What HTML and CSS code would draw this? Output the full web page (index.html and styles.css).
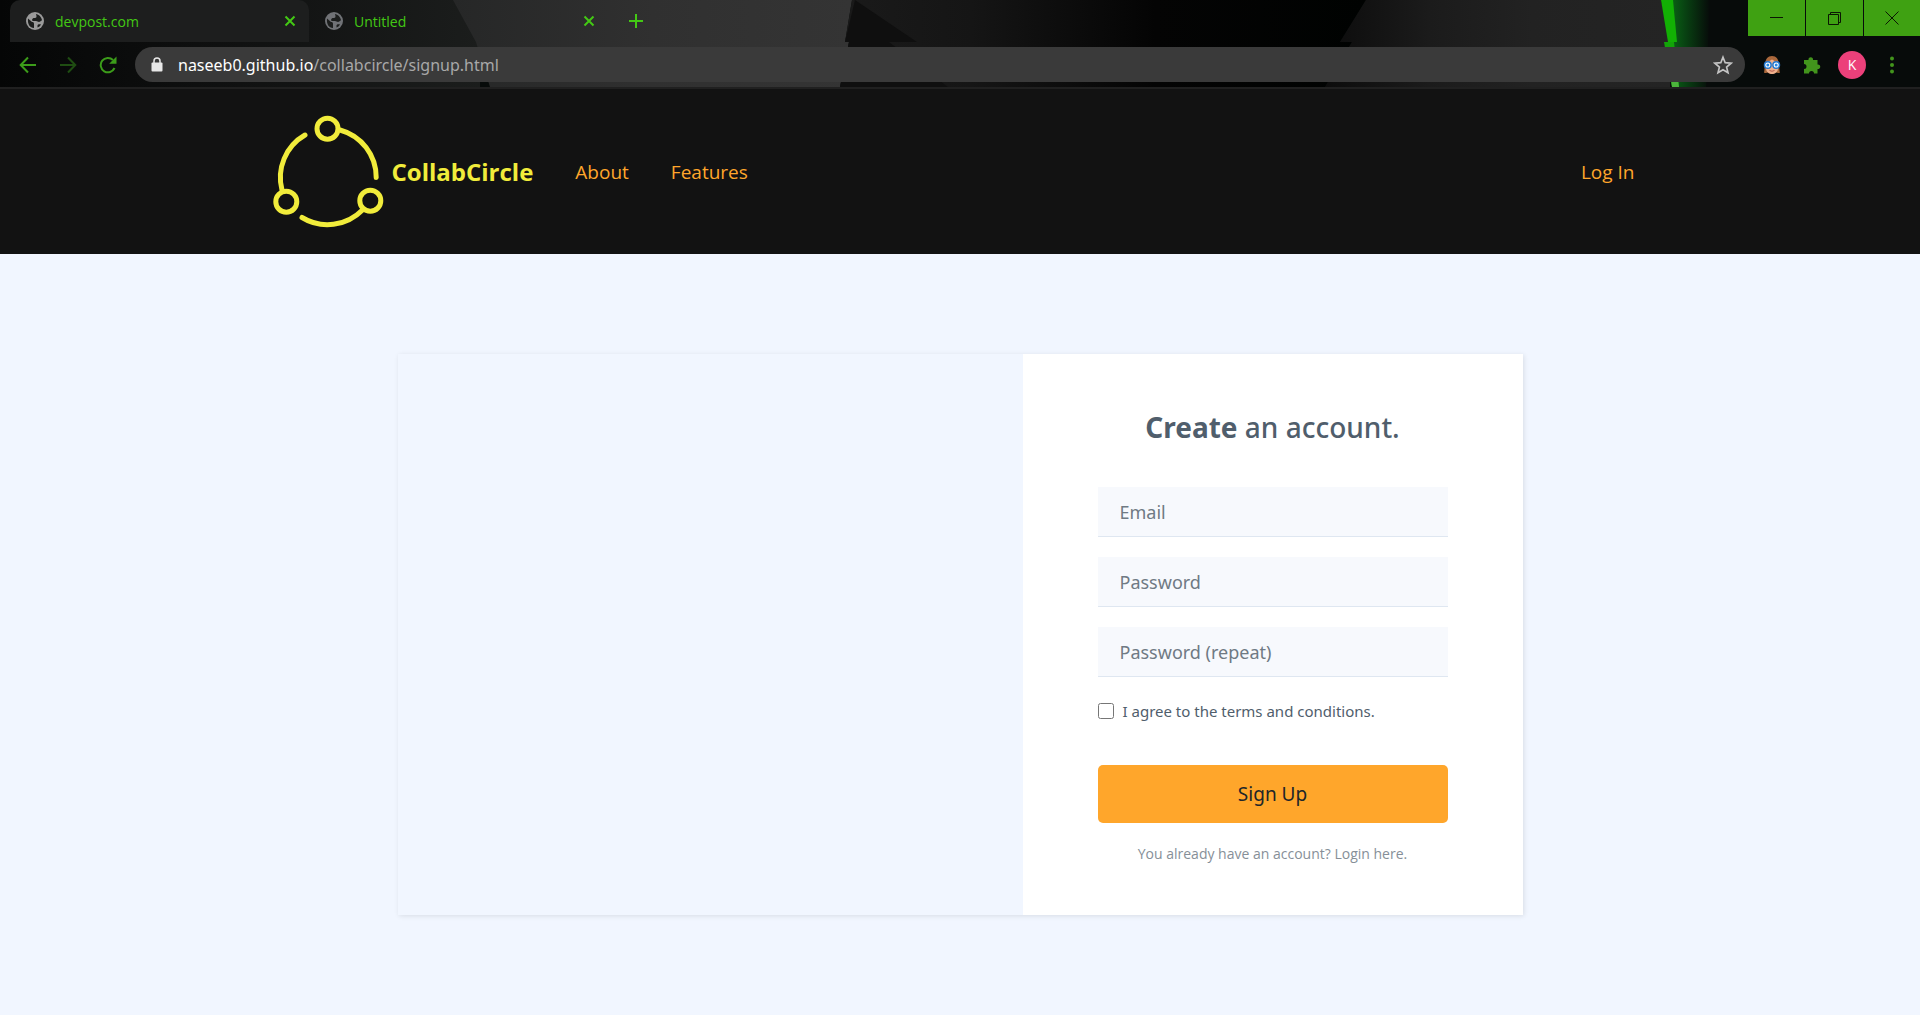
FILE: index.html
```html
<!DOCTYPE html>
<html lang="en">
<head>
<meta charset="utf-8">
<meta name="viewport" content="width=device-width, initial-scale=1">
<title>CollabCircle</title>
<link rel="stylesheet" href="styles.css">
</head>
<body>
<svg class="defs" aria-hidden="true">
  <symbol id="globe" viewBox="0 0 18 18">
    <circle cx="9" cy="9" r="9" fill="currentColor"/>
    <path d="M2 6.500l4 3.500c1.500 0 2 .5 2 2v4C4 15.700 1.400 12.500 2 6.500zM10 2c2.800.4 5.500 3 6 6.200l-2.200 1.600c-1.500.6-2.400-.8-3.800-.8H6.500C5.500 6.800 7 6 9 6c1.300 0 1.500-.9 1.500-2zM15 12.500c-.8 1.500-2 2.600-3.500 3.100v-2.200c0-1 2-1.500 3.500-.9z" fill="#1c1e1d"/>
  </symbol>
  <symbol id="cross" viewBox="0 0 12 12"><path d="M1.500 1.500l9 9M10.500 1.500l-9 9" stroke="currentColor" stroke-width="2" fill="none"/></symbol>
</svg>

<div class="browser">
  <svg class="theme" viewBox="0 0 1920 87" preserveAspectRatio="none" aria-hidden="true">
    <defs>
      <linearGradient id="g1"><stop offset="0" stop-color="#050606"/><stop offset=".5" stop-color="#101111"/><stop offset="1" stop-color="#1b1d1c"/></linearGradient>
      <linearGradient id="g2"><stop offset="0" stop-color="#262727"/><stop offset=".5" stop-color="#303030"/><stop offset="1" stop-color="#343434"/></linearGradient>
      <linearGradient id="g3"><stop offset="0" stop-color="#1a1a1a"/><stop offset=".25" stop-color="#151515"/><stop offset=".6" stop-color="#040404"/><stop offset="1" stop-color="#000201"/></linearGradient>
      <linearGradient id="g4"><stop offset="0" stop-color="#0c0c0c"/><stop offset=".3" stop-color="#1b1b1b"/><stop offset=".6" stop-color="#222"/><stop offset="1" stop-color="#242424"/></linearGradient>
      <linearGradient id="g5"><stop offset="0" stop-color="#0a6b14"/><stop offset=".4" stop-color="#084312"/><stop offset="1" stop-color="#070b0a"/></linearGradient>
    </defs>
    <path fill="#070b0a" d="M0 0h1920v87H0z"/>
    <path fill="url(#g1)" d="M0 0h480v87H0z"/>
    <path fill="url(#g2)" d="M453 0h399l-7 42h4l-9 45H490l-14-45z"/>
    <path fill="url(#g3)" d="M852 0h514l-26 42h12l-27 45H840l9-45h-4z"/>
    <path fill="#0f0f0f" d="M855 0l62 42h-72z"/>
    <path fill="#0f0f0f" d="M849 42h40l59 45H840z"/>
    <path fill="url(#g4)" d="M1366 0h295l9 42v45h-345l27-45h-12z"/>
    <path fill="url(#g5)" d="M1668 0h42l-4 87h-30z"/>
    <path fill="#12b004" d="M1661 0h12l4 42h-9z"/>
    <path fill="#12a408" d="M1664 42h10l5 45h-7z"/>
    <path fill="#4cb43c" d="M1671 80h7l1 7h-7z"/>
  </svg>
  <div class="tabstrip">
    <div class="tab active"><svg class="favicon"><use href="#globe"/></svg><span>devpost.com</span><button class="close" aria-label="Close tab"><svg width="12" height="12"><use href="#cross"/></svg></button></div>
    <div class="tab"><svg class="favicon dim"><use href="#globe"/></svg><span>Untitled</span><button class="close" aria-label="Close tab"><svg width="12" height="12"><use href="#cross"/></svg></button></div>
    <button class="newtab" aria-label="New tab"><svg width="16" height="16" viewBox="0 0 16 16"><path d="M8 1v14M1 8h14" stroke="currentColor" stroke-width="2"/></svg></button>
    <div class="window-buttons">
      <button aria-label="Minimize"><svg width="14" height="14" viewBox="0 0 14 14"><path d="M0 6.500h13" stroke="#0b1703"/></svg></button>
      <button aria-label="Restore"><svg width="14" height="14" viewBox="0 0 14 14" fill="none" stroke="#0b1703"><path d="M.5 3.500h10v10H.5zM2.500 3V1.500h10v10H11"/></svg></button>
      <button aria-label="Close"><svg width="14" height="14" viewBox="0 0 14 14"><path d="M.5.5l13 13M13.500.5l-13 13" stroke="#0b1703"/></svg></button>
    </div>
  </div>
  <div class="toolbar">
    <button class="tool" aria-label="Back"><svg width="18" height="18" viewBox="0 0 18 18" fill="none" stroke="currentColor" stroke-width="2"><path d="M17 9H2M9 1.500L1.700 9 9 16.500"/></svg></button>
    <button class="tool faded" aria-label="Forward"><svg width="18" height="18" viewBox="0 0 18 18" fill="none" stroke="currentColor" stroke-width="2"><path d="M1 9h15M9 1.500L16.300 9 9 16.500"/></svg></button>
    <button class="tool" aria-label="Reload"><svg width="18" height="18" viewBox="0 0 18 18"><path d="M15.500 12A7.200 7.200 0 1 1 14 4" fill="none" stroke="currentColor" stroke-width="2"/><path d="M17.500.5v7.300h-7.300z" fill="currentColor"/></svg></button>
    <div class="omnibox">
      <svg width="12" height="15" viewBox="0 0 12 15"><path d="M3 6V4a3 3 0 0 1 6 0v2" fill="none" stroke="#e8e8e8" stroke-width="1.500"/><rect x=".5" y="5.500" width="11" height="9" rx="1" fill="#e8e8e8"/></svg>
      <span class="url"><b>naseeb0.github.io</b>/collabcircle/signup.html</span>
      <button class="star" aria-label="Bookmark this page"><svg width="20" height="20" viewBox="0 0 20 20"><path d="M10 2.200l2.200 5.500 5.900.5-4.500 3.900 1.400 5.700-5-3.100-5 3.100 1.400-5.700-4.500-3.900 5.900-.5z" fill="none" stroke="#c4c4c4" stroke-width="1.700"/></svg></button>
    </div>
    <button class="tool" aria-label="Extension"><svg width="18" height="18" viewBox="0 0 18 18"><path d="M1 16.500C2.500 13 0 0 9 0s6.500 13 8 16.500c-1 .8-3 .5-4 0H5c-1 .5-3 .8-4 0z" fill="#a9683c"/><path d="M3 7l6-3.500L15 7v5c0 8-12 8-12 0z" fill="#efb08c"/><path d="M6.500 14.500q2.500 1.500 5 0" stroke="#b85c50" fill="none"/><g fill="#fff" stroke="#2277cf" stroke-width="1.500"><circle cx="4.800" cy="9" r="3.300"/><circle cx="13.200" cy="9" r="3.300"/></g><circle cx="4.800" cy="9" r="1.500" fill="#2589e8"/><circle cx="13.200" cy="9" r="1.500" fill="#2589e8"/></svg></button>
    <button class="tool" aria-label="Extensions"><svg width="18" height="18" viewBox="0 0 18 18"><path d="M1 4h4.500a2.300 2.300 0 1 1 4.500 0h4.500v4.500a2.300 2.300 0 1 1 0 4.500v4.500H11a2.500 2.500 0 0 0-5 0H1V13a2.500 2.500 0 0 0 0-5z" fill="#42941c"/></svg></button>
    <button class="tool" aria-label="Profile"><span class="avatar">K</span></button>
    <button class="tool" aria-label="Menu"><svg width="4" height="18" viewBox="0 0 4 18" fill="#42941c"><circle cx="2" cy="2.500" r="2"/><circle cx="2" cy="9" r="2"/><circle cx="2" cy="15.500" r="2"/></svg></button>
  </div>
</div>

<header class="site-header">
  <nav class="container">
    <a class="brand" href="#">
      <svg width="114" height="116" viewBox="272 114 114 116" fill="none" stroke="#f1ec3b" stroke-width="5" stroke-linecap="round" aria-hidden="true">
        <circle cx="327.500" cy="128.700" r="10.500"/><circle cx="286.300" cy="201.700" r="10.500"/><circle cx="370.300" cy="200.700" r="10.500"/>
        <path d="M340 130A49 49 0 0 1 376.200 177.500M305 135A49 49 0 0 0 282 190M302 217.500A49 49 0 0 0 362.500 210"/>
      </svg>
      <span>CollabCircle</span>
    </a>
    <a href="#">About</a>
    <a href="#">Features</a>
    <a class="login" href="#">Log In</a>
  </nav>
</header>

<main class="signup">
  <div class="card">
    <div class="picture"></div>
    <form>
      <h1><strong>Create</strong> an account.</h1>
      <input class="field" type="email" placeholder="Email" aria-label="Email">
      <input class="field" type="password" placeholder="Password" aria-label="Password">
      <input class="field" type="password" placeholder="Password (repeat)" aria-label="Password (repeat)">
      <label class="agree"><input type="checkbox"><span>I agree to the terms and conditions.</span></label>
      <button class="submit" type="button">Sign Up</button>
      <a class="already" href="#">You already have an account? Login here.</a>
    </form>
  </div>
</main>
</body>
</html>
```
FILE: styles.css
```css
* { box-sizing: border-box; }
body {
  margin: 0;
  background: #fff;
  color: #505e6c;
  font-family: "Open Sans", "Noto Sans", sans-serif;
  font-size: 18px;
}
button { border: 0; padding: 0; background: none; color: inherit; font: inherit; }
a { text-decoration: none; }
svg { display: block; flex: none; }
.defs { position: absolute; width: 0; height: 0; }

.browser {
  position: relative;
  border-bottom: 2px solid #202020;
  background: #070b0a;
  color: #43c814;
  font-size: 14px;
}
.theme { position: absolute; inset: 0; width: 100%; height: 100%; }
.tabstrip, .toolbar { position: relative; display: flex; }
.tabstrip { height: 42px; padding-left: 10px; }
.tab { display: flex; align-items: center; width: 299px; padding: 0 13px 0 16px; }
.tab.active { border-radius: 10px 10px 0 0; background: #1d1e1e; }
.favicon { width: 18px; height: 18px; margin-right: 11px; color: #9a9a9a; }
.favicon.dim { color: #707276; }
.close { margin-left: auto; }
.newtab { width: 56px; display: grid; place-items: center; }
.window-buttons { display: flex; gap: 1px; height: 36px; margin-left: auto; }
.window-buttons button { width: 57px; display: grid; place-items: center; background: #3fa112; }
.window-buttons button:last-child { width: 56px; }

.toolbar { align-items: center; height: 45px; padding: 0 8px; }
.tool { width: 40px; height: 36px; display: grid; place-items: center; color: #3c9c1a; }
.faded { color: #1f4d12; }
.omnibox {
  display: flex;
  align-items: center;
  flex: 1;
  height: 35px;
  margin: 0 7px;
  padding: 0 12px 0 16px;
  border-radius: 18px;
  background: #3a3a3a;
}
.url { margin-left: 15px; color: #a8a8a8; font-family: "Noto Sans", sans-serif; font-size: 16px; }
.url b { color: #fff; font-weight: 400; }
.star { margin-left: auto; }
.avatar {
  width: 28px;
  height: 28px;
  border-radius: 50%;
  background: #ec407a;
  color: #fff;
  line-height: 28px;
  text-align: center;
}

.site-header { background: #121212; }
.container {
  display: flex;
  align-items: center;
  gap: 42px;
  width: 100%;
  max-width: 1425px;
  min-height: 165px;
  margin: 0 auto;
  padding: 0 38px 0 24px;
  font-size: 19px;
}
.container a { color: #ffa62b; }
.container .brand {
  display: flex;
  align-items: center;
  gap: 6px;
  color: #f1ec3b;
  font-size: 24px;
  font-weight: 700;
}
.container .login { margin-left: auto; }

.signup { padding: 100px 16px; background: #f1f6ff; }
.card {
  display: flex;
  max-width: 1125px;
  margin: 0 auto;
  box-shadow: 1px 1px 5px rgba(0, 0, 0, .1);
}
.picture { flex: 1; }
form {
  display: flex;
  flex-direction: column;
  width: 500px;
  padding: 50px 75px;
  background: #fff;
  font-family: "Noto Sans", sans-serif;
}
h1 { margin: 5px 0 42px; font-size: 28px; font-weight: 500; line-height: 36px; text-align: center; }
.field {
  width: 100%;
  height: 50px;
  margin-bottom: 20px;
  padding: 0 22px;
  border: 0;
  border-bottom: 1px solid #dfe7f1;
  border-radius: 0;
  background: #f7f9fd;
  color: #505e6c;
  font: inherit;
}
.field::placeholder { color: #6f7a84; }
.agree { display: flex; align-items: center; gap: 9px; height: 28px; font-size: 15px; }
.agree input { width: 16px; height: 16px; margin: 0; }
.submit {
  height: 58px;
  margin: 40px 0 20px;
  border-radius: 5px;
  background: #ffa62b;
  color: #212529;
  font-size: 19px;
}
.already { color: #868f98; font-family: "Open Sans", sans-serif; font-size: 14px; line-height: 22px; text-align: center; }
```
